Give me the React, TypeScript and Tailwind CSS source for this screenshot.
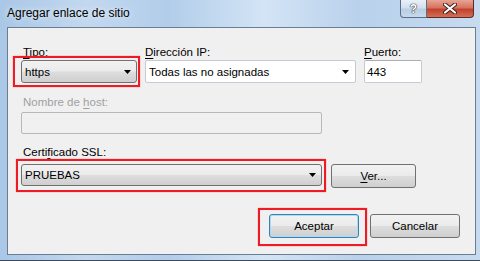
import React from "react";

const Arrow = () => (
  <svg width="7" height="4" viewBox="0 0 7 4" className="shrink-0">
    <path d="M0 0H7L3.5 4Z" fill="#000" />
  </svg>
);

const U = ({ children }: { children: React.ReactNode }) => (
  <span className="underline decoration-1 underline-offset-[2px]">{children}</span>
);

const RedBox = ({ cls }: { cls: string }) => (
  <div className={`pointer-events-none absolute border-2 border-[#ee1b24] shadow-[0_0_1px_#ff6060] ${cls}`} />
);

const btnGrad =
  "bg-[linear-gradient(180deg,#f2f2f2_0%,#ebebeb_48%,#dddddd_52%,#cfcfcf_100%)]";

export default function App() {
  return (
    <div
      className="relative flex h-[261px] w-[480px] flex-col overflow-hidden bg-[linear-gradient(90deg,#a9c7e6_0%,#c2d8ef_18%,#b2cdea_35%,#d3e4f5_55%,#b9d1ec_75%,#c7dbf0_100%)] text-black"
      style={{ fontFamily: '"Liberation Sans", Arial, sans-serif' }}
    >
      {/* title bar */}
      <div className="flex h-[27px] shrink-0 items-start justify-between">
        <div className="pl-[7px] pt-[5px] text-[12px] leading-[16px] text-black [text-shadow:0_0_6px_#ffffff]">
          Agregar enlace de sitio
        </div>
        <div className="mr-[6px] flex">
          <div className="flex h-[18px] w-[27px] items-center justify-center rounded-bl-[4px] border border-t-0 border-[#5b6e88] bg-[linear-gradient(180deg,#e9f0f8_0%,#d3e0ef_45%,#b9cde4_55%,#c8d9ec_100%)]">
            <span className="text-[12px] font-bold leading-none text-white [text-shadow:0_0_1px_#333,0_0_1px_#333,0_0_1px_#333]">
              ?
            </span>
          </div>
          <div className="flex h-[18px] w-[47px] items-center justify-center rounded-br-[4px] border border-l-0 border-t-0 border-[#5e2b24] bg-[linear-gradient(180deg,#e8a493_0%,#d6735f_45%,#c2412b_55%,#d26f58_100%)]">
            <svg width="14" height="11" viewBox="0 0 14 11">
              <path d="M2 1.5L12 9.5M12 1.5L2 9.5" stroke="#3c1e1a" strokeWidth="4" strokeLinecap="round" />
              <path d="M2 1.5L12 9.5M12 1.5L2 9.5" stroke="#ffffff" strokeWidth="2.2" strokeLinecap="round" />
            </svg>
          </div>
        </div>
      </div>

      {/* content panel */}
      <div className="mb-[6px] ml-[7px] mr-[4px] flex flex-1 flex-col border border-[#6c7d92] bg-[#f0f0f0] pl-[13px] pr-[15px] pt-[16px] pb-[16px] text-[11.5px] leading-[16px]">
        {/* row 1 */}
        <div className="flex gap-[8px]">
          <div className="flex w-[116px] flex-col">
            <div className="h-[16px] pl-[2px]">
              <U>T</U>ipo:
            </div>
            <div className="relative h-[23px]">
              <div className={`flex h-full items-center justify-between rounded-[3px] border border-[#707070] pl-[3px] pr-[5px] ${btnGrad}`}>
                <span>https</span>
                <Arrow />
              </div>
              <RedBox cls="-left-[8px] -top-[4px] -right-[3px] -bottom-[4px]" />
            </div>
          </div>
          <div className="flex w-[211px] flex-col">
            <div className="h-[16px] pl-[0px]">
              <U>D</U>irección IP:
            </div>
            <div className="flex h-[23px] items-center justify-between rounded-[2px] border border-[#c5cad3] bg-white pl-[3px] pr-[6px]">
              <span>Todas las no asignadas</span>
              <Arrow />
            </div>
          </div>
          <div className="flex w-[58px] flex-col">
            <div className="h-[16px]">
              <U>P</U>uerto:
            </div>
            <div className="flex h-[23px] items-center rounded-[2px] border border-[#c5cad3] border-t-[#abadb3] bg-white pl-[2px]">
              443
            </div>
          </div>
        </div>

        {/* row 2 */}
        <div className="mt-[11px] h-[16px] pl-[2px] text-[#a0a0a0]">
          Nombre de <U>h</U>ost:
        </div>
        <div className="mt-[2px] h-[22px] w-[301px] rounded-[2px] border border-[#b5b9bd] bg-[#f0f0f0]" />

        {/* row 3 */}
        <div className="mt-[10px] h-[16px] pl-[2px]">
          Certi<U>f</U>icado SSL:
        </div>
        <div className="mt-[4px] flex items-start gap-[9px]">
          <div className="relative h-[22px] w-[301px]">
            <div className={`flex h-full items-center justify-between rounded-[3px] border border-[#707070] pl-[3px] pr-[5px] ${btnGrad}`}>
              <span>PRUEBAS</span>
              <Arrow />
            </div>
            <RedBox cls="-left-[5px] -top-[5px] -right-[4px] -bottom-[6px]" />
          </div>
          <div className={`flex h-[24px] w-[85px] items-center justify-center rounded-[3px] border border-[#707070] ${btnGrad}`}>
            <span>
              <U>V</U>er...
            </span>
          </div>
        </div>

        <div className="flex-1" />

        {/* buttons */}
        <div className="flex justify-end gap-[11px]">
          <div className="relative h-[24px] w-[90px]">
            <div className={`flex h-full items-center justify-center rounded-[3px] border border-[#3c7fb1] shadow-[inset_0_0_0_1px_#a6dcf7] ${btnGrad}`}>
              Aceptar
            </div>
            <RedBox cls="-left-[11px] -top-[6px] -right-[8px] -bottom-[8px]" />
          </div>
          <div className={`flex h-[24px] w-[90px] items-center justify-center rounded-[3px] border border-[#707070] ${btnGrad}`}>
            Cancelar
          </div>
        </div>
      </div>
      <div className="absolute bottom-0 left-0 right-0 h-[1px] bg-[#3d4a5c]" />
    </div>
  );
}
